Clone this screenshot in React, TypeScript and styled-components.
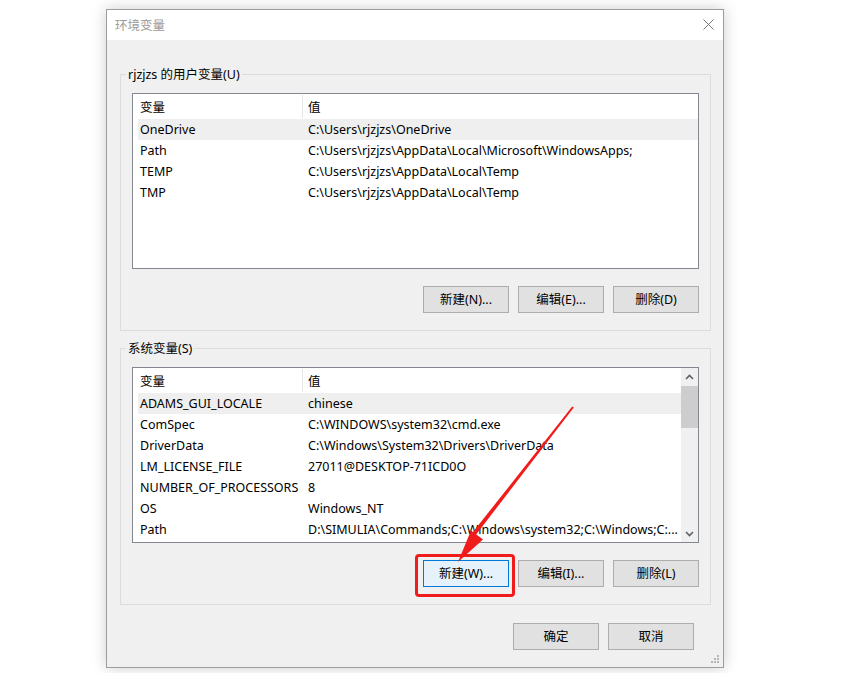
import React from "react";
import styled, { createGlobalStyle } from "styled-components";

const GlobalStyle = createGlobalStyle`
  html, body { margin: 0; padding: 0; background: #ffffff; }
  body {
    font-family: "Noto Sans", "Noto Sans CJK SC", sans-serif;
    font-size: 12.5px;
    color: #000;
  }
  * { box-sizing: border-box; }
`;

const Page = styled.div`
  position: relative;
  width: 841px;
  height: 673px;
  padding: 9px 0 0 106px;
  overflow: hidden;
`;

const Window = styled.div`
  position: relative;
  width: 618px;
  height: 659px;
  border: 1px solid #9d9d9d;
  display: flex;
  flex-direction: column;
  background: #f0f0f0;
  box-shadow: 0 0 14px rgba(0, 0, 0, 0.2);
`;

const TitleBar = styled.div`
  flex: none;
  height: 30px;
  background: #fff;
  display: flex;
  align-items: center;
  justify-content: space-between;
  padding: 0 9px 2px 8px;
`;

const Title = styled.span`
  color: #9a9a9a;
  font-size: 12.5px;
  font-family: "Noto Sans CJK SC", sans-serif;
`;

const Client = styled.div`
  flex: 1;
  display: flex;
  flex-direction: column;
  padding: 26px 12px 0 13px;
`;

const GroupBox = styled.fieldset<{ $mb: number }>`
  margin: 0 0 ${(p) => p.$mb}px;
  padding: 0 11px 17px;
  border: 1px solid #dcdcdc;
  min-width: 0;
`;

const Legend = styled.legend`
  margin-left: -6px;
  padding: 0 2px;
  line-height: 17px;
  height: 17px;
  font-size: 12.5px;
`;

const GroupBody = styled.div`
  padding-top: 10px;
  display: flex;
  flex-direction: column;
  gap: 17px;
`;

const ListBox = styled.div`
  height: 176px;
  border: 1px solid #828790;
  background: #fff;
  display: flex;
  overflow: hidden;
`;

const ListMain = styled.div`
  flex: 1;
  min-width: 0;
  padding-left: 5px;
  overflow: hidden;
`;

const HeaderRow = styled.div`
  display: grid;
  grid-template-columns: 164px 378px;
  height: 25px;
`;

const HeaderCell = styled.div<{ $divider?: boolean }>`
  display: flex;
  align-items: center;
  padding-left: ${(p) => (p.$divider ? 5 : 2)}px;
  border-left: ${(p) => (p.$divider ? "1px solid #e5e5e5" : "none")};
  margin: 1px 0 1px;
`;

const Row = styled.div<{ $selected?: boolean }>`
  display: grid;
  grid-template-columns: 164px 378px;
  height: 21px;
  align-items: center;
  background: ${(p) => (p.$selected ? "#efefef" : "transparent")};
`;

const Cell = styled.div<{ $value?: boolean }>`
  padding-left: ${(p) => (p.$value ? 6 : 2)}px;
  white-space: nowrap;
  overflow: hidden;
`;

const ScrollBar = styled.div`
  flex: none;
  width: 17px;
  background: #f0f0f0;
  display: flex;
  flex-direction: column;
`;

const ScrollArrow = styled.div`
  flex: none;
  height: 17px;
  display: flex;
  align-items: center;
  justify-content: center;
`;

const ScrollThumb = styled.div`
  flex: none;
  height: 42px;
  margin-top: 1px;
  background: #cdcdcd;
`;

const ScrollTrack = styled.div`
  flex: 1;
`;

const ButtonRow = styled.div<{ $pr?: number; $mt?: number }>`
  display: flex;
  justify-content: flex-end;
  gap: 9px;
  padding-right: ${(p) => p.$pr ?? 0}px;
  margin-top: ${(p) => p.$mt ?? 0}px;
`;

const Button = styled.button<{ $focused?: boolean }>`
  width: 86px;
  height: 27px;
  margin: 0;
  padding: 0;
  border: 1px solid ${(p) => (p.$focused ? "#0078d7" : "#adadad")};
  background: ${(p) => (p.$focused ? "#e5f1fb" : "#e1e1e1")};
  font-family: "Noto Sans", "Noto Sans CJK SC", sans-serif;
  font-size: 12.5px;
  color: #000;
  line-height: 25px;
`;

const Grip = styled.svg`
  position: absolute;
  right: 3px;
  bottom: 3px;
`;

const Overlay = styled.svg`
  position: absolute;
  left: 0;
  top: 0;
  pointer-events: none;
`;

type Item = { name: string; value: string; selected?: boolean };

const userVars: Item[] = [
  { name: "OneDrive", value: "C:\\Users\\rjzjzs\\OneDrive", selected: true },
  { name: "Path", value: "C:\\Users\\rjzjzs\\AppData\\Local\\Microsoft\\WindowsApps;" },
  { name: "TEMP", value: "C:\\Users\\rjzjzs\\AppData\\Local\\Temp" },
  { name: "TMP", value: "C:\\Users\\rjzjzs\\AppData\\Local\\Temp" },
];

const sysVars: Item[] = [
  { name: "ADAMS_GUI_LOCALE", value: "chinese", selected: true },
  { name: "ComSpec", value: "C:\\WINDOWS\\system32\\cmd.exe" },
  { name: "DriverData", value: "C:\\Windows\\System32\\Drivers\\DriverData" },
  { name: "LM_LICENSE_FILE", value: "27011@DESKTOP-71ICD0O" },
  { name: "NUMBER_OF_PROCESSORS", value: "8" },
  { name: "OS", value: "Windows_NT" },
  { name: "Path", value: "D:\\SIMULIA\\Commands;C:\\Windows\\system32;C:\\Windows;C:..." },
];

const Chevron = ({ up }: { up: boolean }) => (
  <svg width="9" height="6" viewBox="0 0 9 6">
    <path
      d={up ? "M1 5 L4.5 1.5 L8 5" : "M1 1 L4.5 4.5 L8 1"}
      fill="none"
      stroke="#606060"
      strokeWidth="1.6"
    />
  </svg>
);

const VarList = ({ items, scroll }: { items: Item[]; scroll?: boolean }) => (
  <ListBox>
    <ListMain>
      <HeaderRow>
        <HeaderCell>变量</HeaderCell>
        <HeaderCell $divider>值</HeaderCell>
      </HeaderRow>
      {items.map((it) => (
        <Row key={it.name + it.value} $selected={it.selected}>
          <Cell>{it.name}</Cell>
          <Cell $value>{it.value}</Cell>
        </Row>
      ))}
    </ListMain>
    {scroll && (
      <ScrollBar>
        <ScrollArrow>
          <Chevron up />
        </ScrollArrow>
        <ScrollThumb />
        <ScrollTrack />
        <ScrollArrow>
          <Chevron up={false} />
        </ScrollArrow>
      </ScrollBar>
    )}
  </ListBox>
);

export default function App() {
  return (
    <>
      <GlobalStyle />
      <Page>
        <Window>
          <TitleBar>
            <Title>环境变量</Title>
            <svg width="11" height="11" viewBox="0 0 11 11">
              <path d="M0.5 0.5 L10.5 10.5 M10.5 0.5 L0.5 10.5" stroke="#777" strokeWidth="1" />
            </svg>
          </TitleBar>
          <Client>
            <GroupBox $mb={9}>
              <Legend>rjzjzs 的用户变量(U)</Legend>
              <GroupBody>
                <VarList items={userVars} />
                <ButtonRow>
                  <Button>新建(N)...</Button>
                  <Button>编辑(E)...</Button>
                  <Button>删除(D)</Button>
                </ButtonRow>
              </GroupBody>
            </GroupBox>
            <GroupBox $mb={0}>
              <Legend>系统变量(S)</Legend>
              <GroupBody>
                <VarList items={sysVars} scroll />
                <ButtonRow>
                  <Button $focused>新建(W)...</Button>
                  <Button>编辑(I)...</Button>
                  <Button>删除(L)</Button>
                </ButtonRow>
              </GroupBody>
            </GroupBox>
            <ButtonRow $pr={17} $mt={18}>
              <Button>确定</Button>
              <Button>取消</Button>
            </ButtonRow>
          </Client>
          <Grip width="10" height="10" viewBox="0 0 10 10">
            <g fill="#b5b5b5">
              <rect x="7" y="1" width="2" height="2" />
              <rect x="4" y="4" width="2" height="2" />
              <rect x="7" y="4" width="2" height="2" />
              <rect x="1" y="7" width="2" height="2" />
              <rect x="4" y="7" width="2" height="2" />
              <rect x="7" y="7" width="2" height="2" />
            </g>
          </Grip>
        </Window>
        <Overlay width="841" height="673" viewBox="0 0 841 673">
          <rect x="416.5" y="555.5" width="97" height="40" rx="2.5" fill="none" stroke="#f01c1c" strokeWidth="3" />
          <polygon points="573.8,407.6 572.2,406.4 472.6,532.5 475.8,534.9" fill="#f01c1c" />
          <polygon points="458,562 471,530.5 483,539.5" fill="#f01c1c" />
        </Overlay>
      </Page>
    </>
  );
}
